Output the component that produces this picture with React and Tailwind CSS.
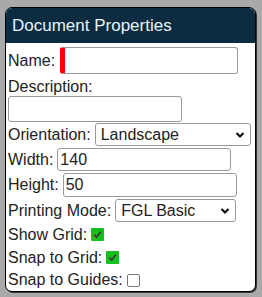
import React from 'react';

function Check({ checked }) {
  if (!checked) {
    return <span className="inline-block w-[13px] h-[13px] border border-[#767676] rounded-[2px] bg-white" />;
  }
  return (
    <span className="inline-flex items-center justify-center w-[13px] h-[13px] bg-[#16c01c] rounded-[1px]">
      <svg width="11" height="11" viewBox="0 0 12 12">
        <path d="M2.5 6.2 L5 8.7 L9.6 3" fill="none" stroke="#3a3a3a" strokeWidth="2" />
      </svg>
    </span>
  );
}

function Select({ value, width }) {
  return (
    <div className="relative h-[23px] border border-[#999] rounded-[3px] bg-white flex items-center pl-[5px]" style={{ width }}>
      <span>{value}</span>
      <svg className="absolute right-[5px] top-[7px]" width="10" height="8" viewBox="0 0 10 8">
        <path d="M1.5 2 L5 5.5 L8.5 2" fill="none" stroke="#111" strokeWidth="2.2" />
      </svg>
    </div>
  );
}

export default function App() {
  return (
    <div className="w-[262px] h-[297px] bg-[#a9a9a9] pt-[7px] pl-[5px] font-['Liberation_Sans',Arial,sans-serif] text-[16px] text-[#222] leading-[18px]">
      <div className="w-[251px] h-[285px] bg-white border border-black rounded-[7px] overflow-hidden shadow-[1px_1px_0_#333]">
        <div className="h-[35px] bg-[#0b2b40] text-[#e6f4fb] text-[17px] flex items-center pl-[6px] pt-[1px]">
          Document Properties
        </div>
        <div className="pl-[2px]">
          <div className="flex items-center h-[32px] pt-[3px]">
            <span>Name:</span>
            <div className="ml-[5px] w-[178px] h-[27px] border border-[#999] rounded-[3px] border-l-[5px] border-l-[#f00]" />
          </div>
          <div className="h-[21px] pt-[3px]">Description:</div>
          <div className="w-[174px] h-[26px] border border-[#999] rounded-[3px]" />
          <div className="flex items-center h-[25px]">
            <span>Orientation:</span>
            <div className="ml-[4px]"><Select value="Landscape" width={156} /></div>
          </div>
          <div className="flex items-center h-[25px]">
            <span>Width:</span>
            <div className="ml-[4px] w-[174px] h-[23px] border border-[#999] rounded-[3px] flex items-center pl-[2px]">140</div>
          </div>
          <div className="flex items-center h-[26px]">
            <span>Height:</span>
            <div className="ml-[4px] w-[174px] h-[24px] border border-[#999] rounded-[3px] flex items-center pl-[2px]">50</div>
          </div>
          <div className="flex items-center h-[25px]">
            <span>Printing Mode:</span>
            <div className="ml-[4px]"><Select value="FGL Basic" width={121} /></div>
          </div>
          <div className="flex items-center h-[23px]">
            <span>Show Grid:</span>
            <span className="ml-[4px] flex"><Check checked /></span>
          </div>
          <div className="flex items-center h-[23px]">
            <span>Snap to Grid:</span>
            <span className="ml-[4px] flex"><Check checked /></span>
          </div>
          <div className="flex items-center h-[22px]">
            <span>Snap to Guides:</span>
            <span className="ml-[4px] flex"><Check /></span>
          </div>
        </div>
      </div>
    </div>
  );
}
